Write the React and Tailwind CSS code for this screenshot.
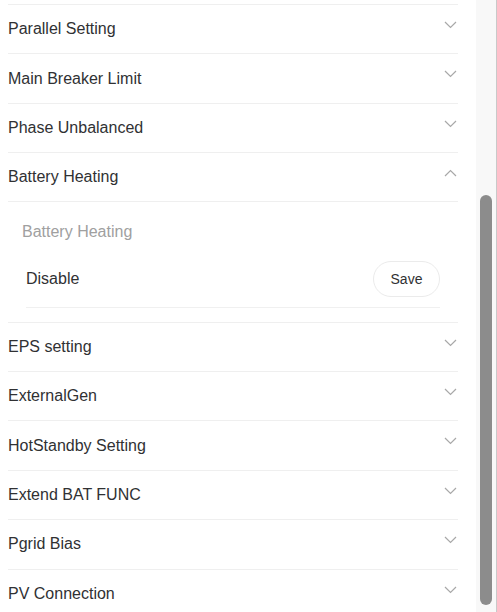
import React from 'react';

const font = { fontFamily: '"Liberation Sans", Arial, sans-serif' };

function Chevron({ up = false }) {
  return (
    <svg width="13" height="8" viewBox="0 0 13 8" className="shrink-0">
      <path
        d={up ? 'M1 7 L6.5 1.5 L12 7' : 'M1 1 L6.5 6.5 L12 1'}
        fill="none"
        stroke="#a8a8a8"
        strokeWidth="1.2"
      />
    </svg>
  );
}

function Row({ label, open = false, h = 'h-[49.4px]' }) {
  return (
    <div className={`flex ${h} items-center justify-between border-b border-[#efefef]`}>
      <span className="text-[16px] text-[#303133]">{label}</span>
      <div className="self-start pt-[16px] pr-[1px]">
        <Chevron up={open} />
      </div>
    </div>
  );
}

export default function App() {
  const before = ['Parallel Setting', 'Main Breaker Limit', 'Phase Unbalanced'];
  const after = ['EPS setting', 'ExternalGen', 'HotStandby Setting', 'Extend BAT FUNC', 'Pgrid Bias', 'PV Connection'];

  return (
    <div className="flex h-[612px] w-[497px] overflow-hidden bg-white" style={font}>
      <div className="flex-1 pl-2 pr-[18px]">
        <div className="h-[5px] border-b border-[#efefef]" />
        {before.map((l) => (
          <Row key={l} label={l} />
        ))}
        <Row label="Battery Heating" open h="h-[48.5px]" />
        <div className="border-b border-[#efefef] pb-[14px] pl-[14px] pr-[18px] pt-[20px]">
          <div className="text-[16px] leading-5 text-[#a0a0a0]">Battery Heating</div>
          <div className="ml-1 mt-[20px] flex h-[46px] items-center justify-between border-b border-[#f0f0f0] pb-[10px]">
            <span className="text-[16px] text-[#303133]">Disable</span>
            <button className="h-[36px] w-[67px] rounded-full border border-[#ebebeb] bg-white text-[14px] text-[#303133]">
              Save
            </button>
          </div>
        </div>
        {after.map((l) => (
          <Row key={l} label={l} />
        ))}
      </div>
      <div className="flex w-[21px] flex-col border-r border-[#c9c9c9] bg-[#f8f8f8] pb-[7px] pl-1 pr-[4px] pt-[195px]">
        <div className="w-3 flex-1 rounded-full bg-[#8c8c8c]" />
      </div>
    </div>
  );
}
